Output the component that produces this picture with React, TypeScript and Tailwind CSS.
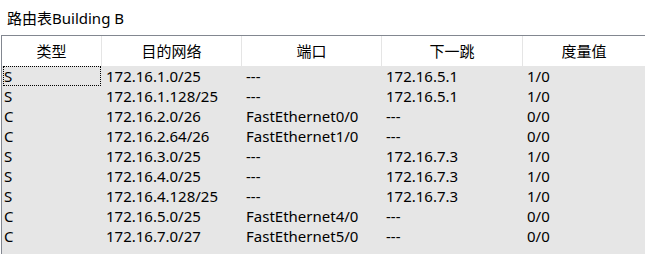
import React from 'react'

const columns = [
    {title: '类型', width: 'w-[100px]'},
    {title: '目的网络', width: 'w-[140px]'},
    {title: '端口', width: 'w-[140px]'},
    {title: '下一跳', width: 'w-[141px]'},
    {title: '度量值', width: 'flex-1'},
]

const routes = [
    ['S', '172.16.1.0/25', '---', '172.16.5.1', '1/0'],
    ['S', '172.16.1.128/25', '---', '172.16.5.1', '1/0'],
    ['C', '172.16.2.0/26', 'FastEthernet0/0', '---', '0/0'],
    ['C', '172.16.2.64/26', 'FastEthernet1/0', '---', '0/0'],
    ['S', '172.16.3.0/25', '---', '172.16.7.3', '1/0'],
    ['S', '172.16.4.0/25', '---', '172.16.7.3', '1/0'],
    ['S', '172.16.4.128/25', '---', '172.16.7.3', '1/0'],
    ['C', '172.16.5.0/25', 'FastEthernet4/0', '---', '0/0'],
    ['C', '172.16.7.0/27', 'FastEthernet5/0', '---', '0/0'],
]

export default function App() {
    return (
        <div
            className="w-[645px] h-[254px] bg-white overflow-hidden text-[15px] text-black"
            style={{fontFamily: '"Noto Sans", "Noto Sans CJK SC", sans-serif'}}
        >
            <div className="h-[35px] pl-[7px] pt-[6px] leading-[24px]">路由表Building B</div>
            <div className="ml-[1px] border-l border-t border-[#828790] h-[219px] bg-[#e6e6e6]">
                <div className="flex h-[30px] bg-white">
                    {columns.map((col, i) => (
                        <div
                            key={col.title}
                            className={`${col.width} shrink-0 flex items-center justify-center ${i < columns.length - 1 ? 'border-r border-[#e5e5e5]' : ''}`}
                        >
                            {col.title}
                        </div>
                    ))}
                </div>
                {routes.map((row, r) => (
                    <div key={r} className="flex h-[20px] leading-[20px]">
                        {row.map((cell, c) => (
                            <div
                                key={c}
                                className={`${columns[c].width} shrink-0 ${c === 0 ? 'pl-[2px]' : 'pl-[4px]'}`}
                            >
                                {r === 0 && c === 0 ? (
                                    <div className="-ml-[1px] mr-[1px] h-[20px] border border-dotted border-black leading-[18px]">
                                        {cell}
                                    </div>
                                ) : (
                                    cell
                                )}
                            </div>
                        ))}
                    </div>
                ))}
            </div>
        </div>
    )
}
